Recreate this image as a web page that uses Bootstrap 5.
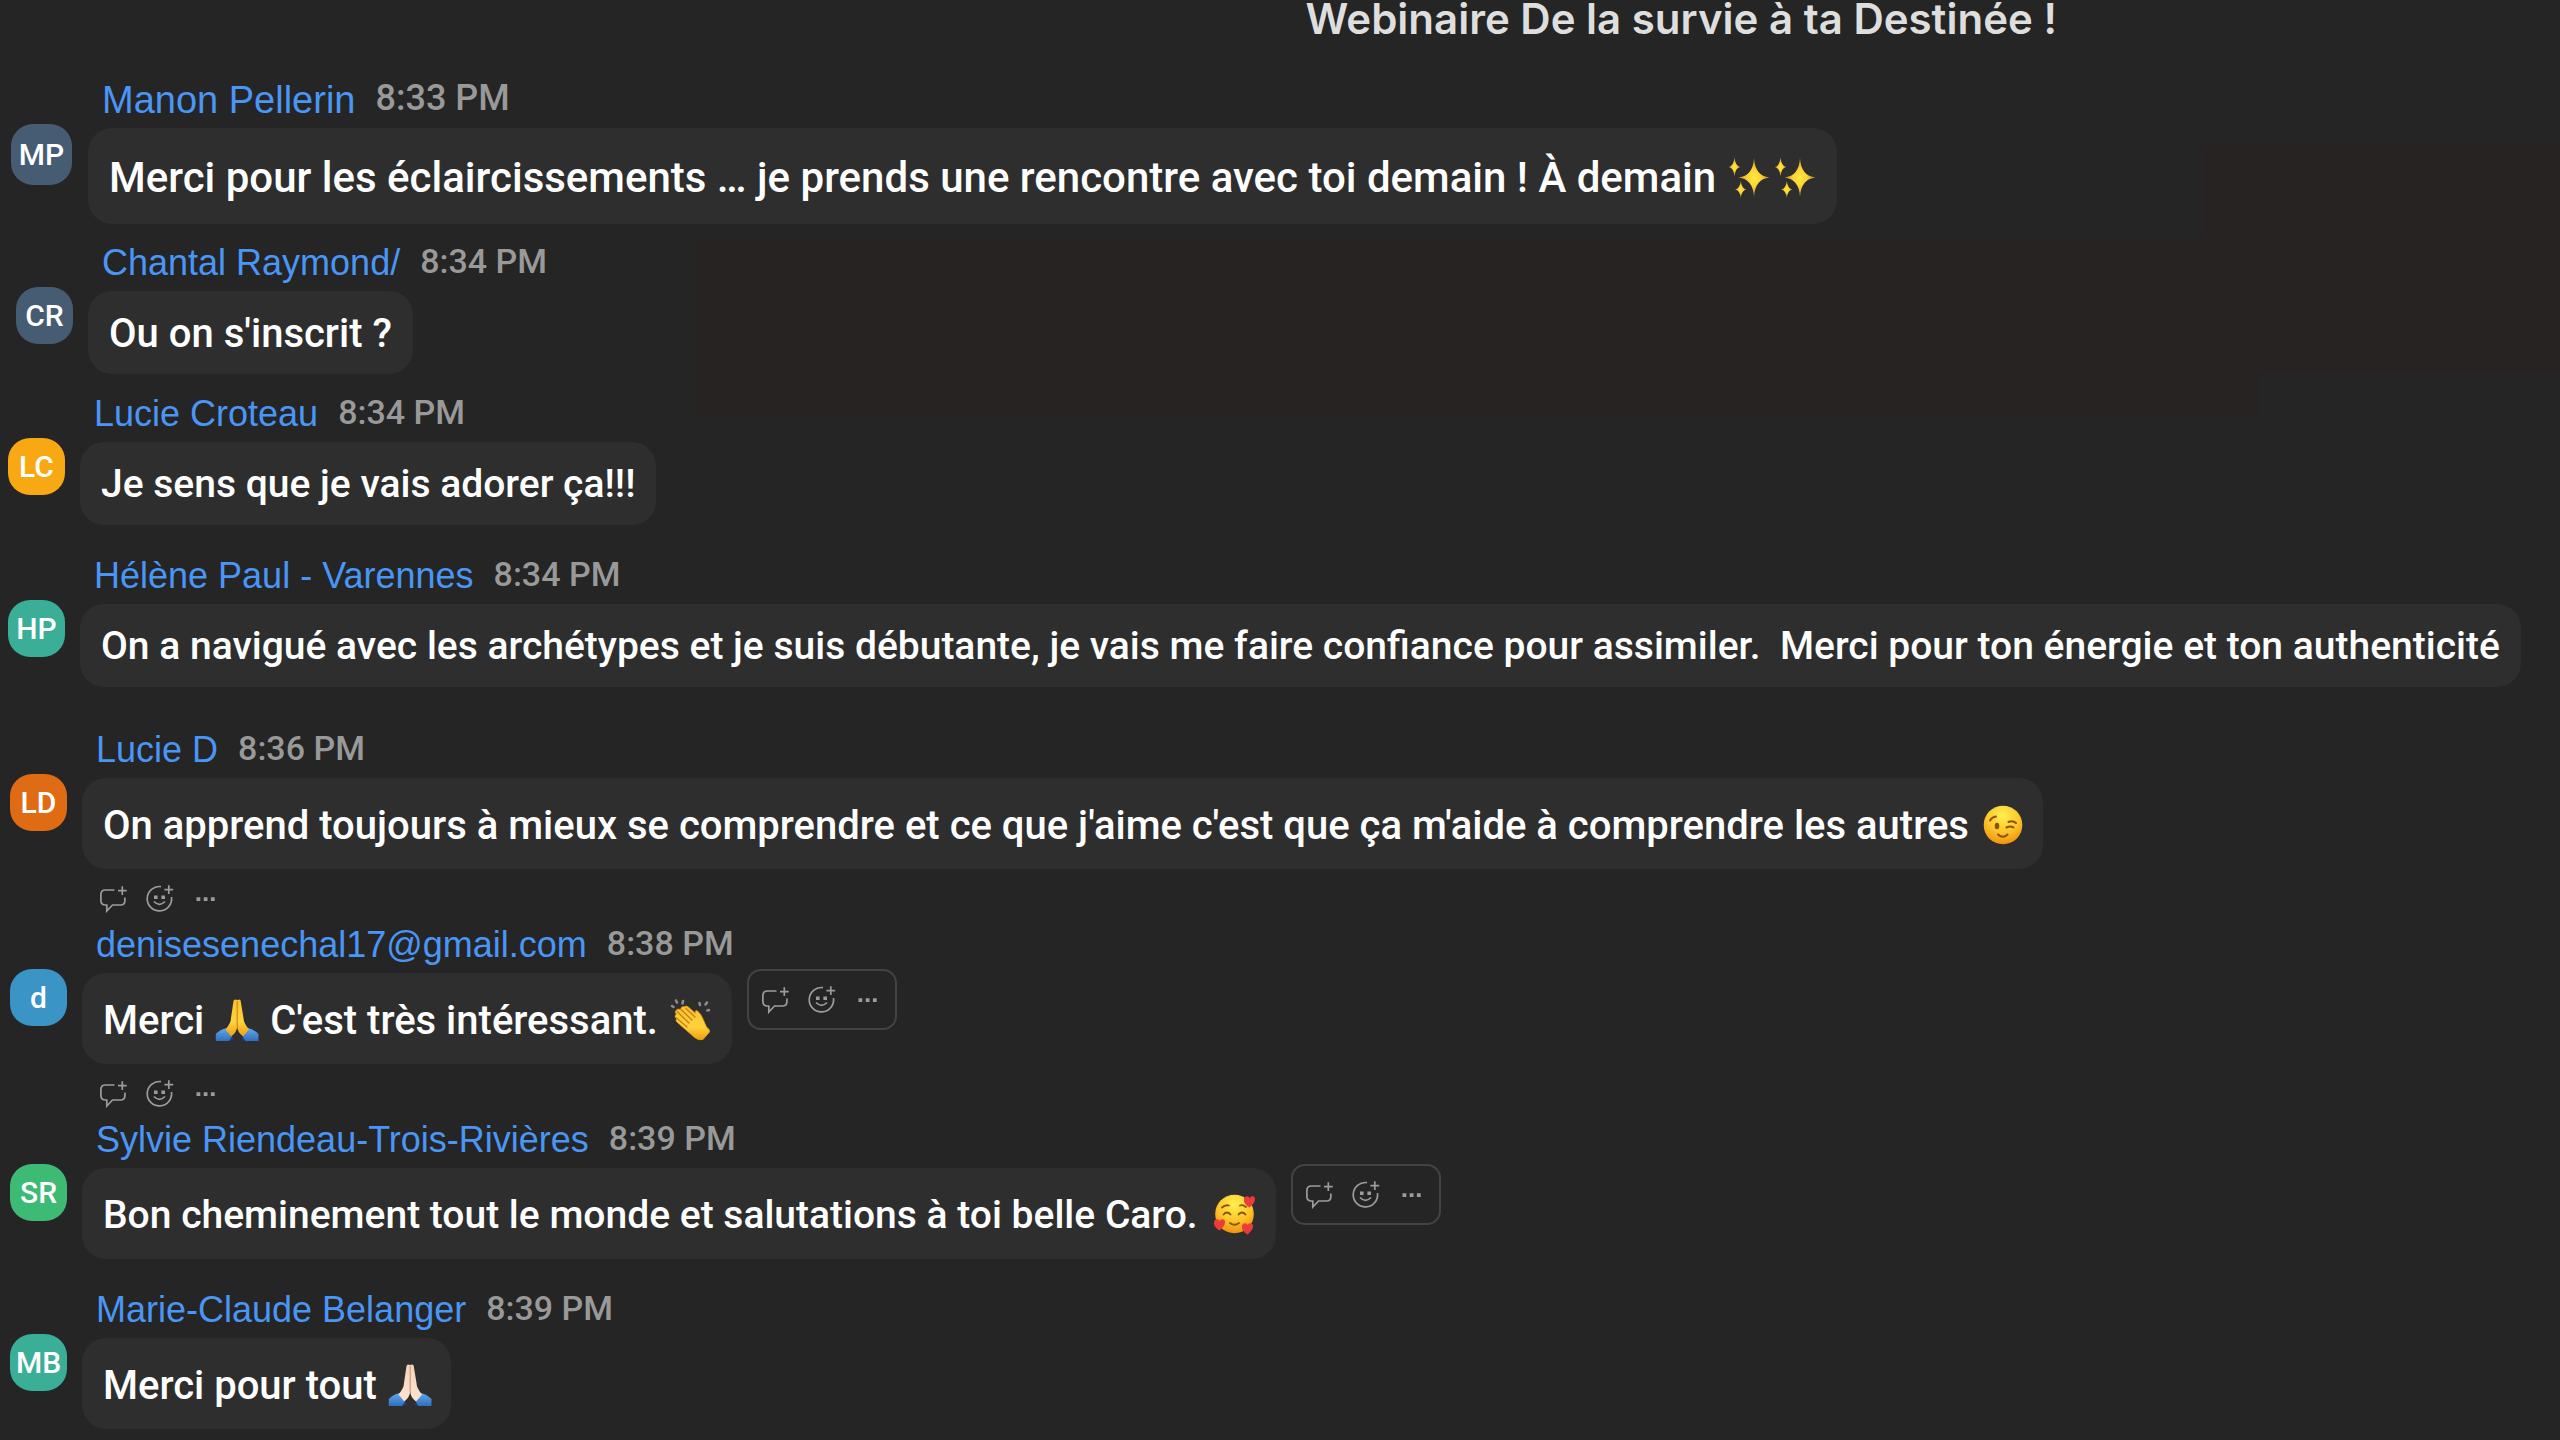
<!DOCTYPE html>
<html lang="fr" data-bs-theme="dark">
<head>
<meta charset="utf-8">
<meta name="viewport" content="width=device-width, initial-scale=1">
<title>Webinaire De la survie à ta Destinée !</title>
<link href="https://cdn.jsdelivr.net/npm/bootstrap@5.3.0/dist/css/bootstrap.min.css" rel="stylesheet">
<style>
  body {
    background-color: #252525;
    background-image: linear-gradient(#272322, #272322), linear-gradient(#272322, #272322);
    background-size: 61% 179px, 14% 227px;
    background-position: right 302px top 239px, right 0 top 145px;
    background-repeat: no-repeat;
    color: #fff;
    font-family: Roboto, "Liberation Sans", sans-serif;
  }
  .chat-title { margin-left: 51%; height: 79px; font: 600 42px/38px Inter, sans-serif; color: #dedede; }
  .msg { padding-left: 10px; gap: 15px; margin-bottom: 30px; }
  .msg-tight { margin-bottom: 19px; }
  .msg-wide { margin-bottom: 42px; }
  .msg-acts { margin-bottom: 0; }
  .msg-in { padding-left: 16px; }
  .msg-out { padding-left: 8px; }
  .avatar { width: 57px; height: 57px; margin-top: 45px; border-radius: 22px; font-size: 30px; font-weight: 500; line-height: 1; }
  .bg-slate { background: #465c73; }
  .bg-amber { background: #f8a813; }
  .bg-teal { background: #3aae97; }
  .bg-rust { background: #df6c14; }
  .bg-sky { background: #3a94c6; }
  .bg-leaf { background: #3dba74; }
  .who { gap: 20px; padding-left: 14px; margin-bottom: 7px; }
  .who a { font: 400 36px/42px "Liberation Sans", sans-serif; color: #4a96f5; text-decoration: none; }
  .who time { font-size: 34px; font-weight: 500; line-height: 38px; color: #999; }
  .bubble { background: #2e2e2e; border-radius: 24px; padding: 19px 21px 17px; font-size: 40px; font-weight: 500; line-height: 47px; white-space: pre-wrap; }
  .bubble-tall { padding: 24px 18px 20px 21px; }
  .bubble-dense { font-size: 39px; }
  .bubble svg { width: 46px; height: 44px; vertical-align: -8px; }
  .bubble-dense svg { margin-left: 14px; }
  .msg-lg { padding-left: 11px; gap: 16px; margin-bottom: 18px; }
  .msg-lg .avatar { width: 61px; height: 61px; }
  .msg-lg .who a { font-size: 38px; }
  .msg-lg .who time { font-size: 36px; }
  .msg-lg .bubble { font-size: 42px; padding: 26px 18px 23px 21px; }
  .acts { gap: 18px; }
  .acts-row { padding: 16px 0 11px 18px; }
  .acts-box { border: 2px solid #434343; border-radius: 14px; height: 61px; padding: 0 13px; margin: -4px 0 0 15px; }
  .acts button { border: 0; padding: 0; background: none; display: block; line-height: 0; }
  .acts svg { width: 28px; height: 28px; stroke: #9c9c9c; stroke-width: 1.7; fill: none; }
</style>
<script src="https://cdn.jsdelivr.net/npm/bootstrap@5.3.0/dist/js/bootstrap.bundle.min.js"></script>
</head>
<body>
<svg width="0" height="0" class="position-absolute" aria-hidden="true">
  <defs>
    <radialGradient id="gFace" cx=".5" cy=".25" r=".8"><stop offset="0" stop-color="#fff04e"/><stop offset=".55" stop-color="#fcc42a"/><stop offset="1" stop-color="#ee8a08"/></radialGradient>
    <linearGradient id="gHand" x2="0" y2="1"><stop offset="0" stop-color="#f9c22d"/><stop offset=".6" stop-color="#ffd33e"/><stop offset="1" stop-color="#f0a010"/></linearGradient>
    <linearGradient id="gPale" x2="0" y2="1"><stop offset="0" stop-color="#f5d5ba"/><stop offset="1" stop-color="#fde3cf"/></linearGradient>
    <linearGradient id="gCuff" x2="0" y2="1"><stop offset="0" stop-color="#62a9ee"/><stop offset="1" stop-color="#2f6fbd"/></linearGradient>
    <radialGradient id="gStar"><stop offset="0" stop-color="#ffe83f"/><stop offset=".45" stop-color="#fbd334"/><stop offset="1" stop-color="#c98224"/></radialGradient>
    <symbol id="reply" viewBox="0 0 28 28"><path d="M14.500 5H5.500Q.9 5 .9 9.500V15.500Q.9 20 5.500 20H6.800V26L12.500 20H20.500Q24.900 20 24.900 15.500V12.500M22.300 1.200V10M18 5.600H26.700"/></symbol>
    <symbol id="react" viewBox="0 0 28 28"><path d="M15 1.600A12.200 12.200 0 1 0 25.500 12M22.800 .2V9M18.400 4.600H27.200M8 16.500Q13.500 22.200 19 16.500"/><path fill="#9c9c9c" stroke="none" d="M8 10.500h3.600v3.600H8zM15.400 10.500H19v3.600h-3.600z"/></symbol>
    <symbol id="more" viewBox="0 0 28 28"><path fill="#9c9c9c" stroke="none" d="M4.500 12.200h3.800V16H4.500zM11.700 12.200h3.800V16h-3.800zM18.900 12.200h3.800V16h-3.800z"/></symbol>
    <symbol id="sparkles" viewBox="0 0 44 44"><g fill="url(#gStar)"><path d="M26 2Q27 20 41.500 21.500Q27 23 26 41Q25 23 10.500 21.500Q25 20 26 2Z"/><path d="M6.500 1.500Q7.300 10.200 12.200 11Q7.300 11.800 6.500 20.500Q5.700 11.800 .8 11Q5.700 10.200 6.500 1.500Z"/><path d="M12.800 25Q13.600 32.700 18.500 33.500Q13.600 34.300 12.800 42Q12 34.300 7 33.500Q12 32.700 12.800 25Z"/></g></symbol>
    <symbol id="wink" viewBox="0 0 44 44"><circle cx="23" cy="22" r="19.300" fill="url(#gFace)"/><g fill="none" stroke="#8a5306" stroke-width="2" stroke-linecap="round"><path d="M10 17.500Q12 14 16 13.500M28.500 19Q32.500 17 36 20M26.500 24.500Q30.500 22.500 33.500 24.500M18 31.500Q23 36 27.500 31.500"/></g><ellipse cx="17" cy="23" rx="2.300" ry="3.300" fill="#8a5306"/></symbol>
    <symbol id="adore" viewBox="0 0 44 44"><circle cx="21.500" cy="22" r="19.300" fill="url(#gFace)"/><g fill="none" stroke="#8a5306" stroke-width="1.800" stroke-linecap="round"><path d="M9 15.500Q12 12.500 16 13.500M27 13.500Q30 12.500 33 15M10.500 22.500Q14 18.500 17.500 22.500M25.500 22.500Q29 18.500 32.500 22.500M17 31Q21.500 34.500 26 31"/></g><g fill="#ec3b3b"><path id="hrt" d="M36.500 15.500C31 12 30.500 9 31.200 6.200C32.500 3 36 4 36.500 6C38 3.500 42 3.500 42 7C42 10.500 39 13.500 36.500 15.500Z"/><use href="#hrt" transform="translate(-30 23)"/><use href="#hrt" transform="translate(-2 27)"/></g></symbol>
    <symbol id="clap" viewBox="0 0 44 44"><path fill="url(#gHand)" stroke="#e59a13" stroke-width=".8" d="M6.500 13Q8.500 10 11.500 11.500Q12 8 15.500 8.500Q18 7 20.500 10L26.500 15.500Q25.500 11.500 28.500 13Q32 16 33.500 20L37.500 29Q41.500 32 40.500 34L34 41.500Q29 43 25 39L9 25Q6 23 7.500 20.500Q4.500 18 7.500 16Q5.500 14.500 6.500 13Z"/><path fill="none" stroke="#c98113" stroke-width="1.400" stroke-linecap="round" d="M8 13.500L20 25M12 11.500L23 22M7.500 20L18 29M17 10.500L26 19"/><path stroke="#8d8d8d" stroke-width="2.600" stroke-linecap="round" d="M3 8L4.500 9M7 2.500L8 4.500M14 3L13.500 5.500M30.500 5L31 7M38 4.500L36.500 6.500M40 12L38.500 12.500"/></symbol>
    <symbol id="sleeves" viewBox="0 0 44 44"><path fill="#163f80" d="M11 31L19 41L15 43H9ZM34 31L26 41L30 43H36Z"/><path fill="url(#gCuff)" d="M.8 36Q5 31.500 11.500 30L17 37.500Q15.500 41.500 14 43H.8ZM43.500 36Q39 31.500 33 30L27.500 37.500Q29 41.500 30.500 43H43.500Z"/></symbol>
    <symbol id="pray" viewBox="0 0 44 44"><use href="#sleeves"/><path fill="url(#gHand)" d="M22.200 2Q25.500 .5 25.700 3L28.500 20Q28.500 25 34 31.500L28 38.500Q22.200 34 22.200 28Q22 34 16.300 38.500L10.500 31.500Q16 25 16 20L18.500 3Q19 .5 22.200 2Z"/><path d="M22.200 3V29" stroke="#cf8b13" stroke-width="1.200"/></symbol>
    <symbol id="praypale" viewBox="0 0 44 44"><use href="#sleeves"/><path fill="url(#gPale)" d="M22.200 2Q25.500 .5 25.700 3L28.500 20Q28.500 25 34 31.500L28 38.500Q22.200 34 22.200 28Q22 34 16.300 38.500L10.500 31.500Q16 25 16 20L18.500 3Q19 .5 22.200 2Z"/><path d="M22.200 3V29" stroke="#c99b7e" stroke-width="1.200"/></symbol>
  </defs>
</svg>

<h1 class="chat-title mb-0 text-nowrap">Webinaire De la survie à ta Destinée !</h1>

<main>
  <article class="msg msg-lg d-flex align-items-start">
    <span class="avatar bg-slate d-flex flex-shrink-0 align-items-center justify-content-center">MP</span>
    <div>
      <header class="who d-flex align-items-start"><a href="#">Manon Pellerin</a><time>8:33 PM</time></header>
      <div class="d-flex align-items-start"><p class="bubble mb-0">Merci pour les éclaircissements … je prends une rencontre avec toi demain ! À demain <svg role="img" aria-label="✨"><use href="#sparkles"/></svg><svg role="img" aria-label="✨"><use href="#sparkles"/></svg></p></div>
    </div>
  </article>

  <article class="msg msg-tight msg-in d-flex align-items-start">
    <span class="avatar bg-slate d-flex flex-shrink-0 align-items-center justify-content-center">CR</span>
    <div>
      <header class="who d-flex align-items-start"><a href="#">Chantal Raymond/</a><time>8:34 PM</time></header>
      <div class="d-flex align-items-start"><p class="bubble mb-0">Ou on s'inscrit ?</p></div>
    </div>
  </article>

  <article class="msg msg-out d-flex align-items-start">
    <span class="avatar bg-amber d-flex flex-shrink-0 align-items-center justify-content-center">LC</span>
    <div>
      <header class="who d-flex align-items-start"><a href="#">Lucie Croteau</a><time>8:34 PM</time></header>
      <div class="d-flex align-items-start"><p class="bubble bubble-dense mb-0">Je sens que je vais adorer ça!!!</p></div>
    </div>
  </article>

  <article class="msg msg-wide msg-out d-flex align-items-start">
    <span class="avatar bg-teal d-flex flex-shrink-0 align-items-center justify-content-center">HP</span>
    <div>
      <header class="who d-flex align-items-start"><a href="#">Hélène Paul - Varennes</a><time>8:34 PM</time></header>
      <div class="d-flex align-items-start"><p class="bubble bubble-dense mb-0">On a navigué avec les archétypes et je suis débutante, je vais me faire confiance pour assimiler.  Merci pour ton énergie et ton authenticité</p></div>
    </div>
  </article>

  <article class="msg msg-acts d-flex align-items-start">
    <span class="avatar bg-rust d-flex flex-shrink-0 align-items-center justify-content-center">LD</span>
    <div>
      <header class="who d-flex align-items-start"><a href="#">Lucie D</a><time>8:36 PM</time></header>
      <div class="d-flex align-items-start"><p class="bubble bubble-tall mb-0">On apprend toujours à mieux se comprendre et ce que j'aime c'est que ça m'aide à comprendre les autres <svg role="img" aria-label="😉"><use href="#wink"/></svg></p></div>
      <div class="acts acts-row d-flex"><button type="button" aria-label="Répondre"><svg><use href="#reply"/></svg></button><button type="button" aria-label="Réagir"><svg><use href="#react"/></svg></button><button type="button" aria-label="Plus"><svg><use href="#more"/></svg></button></div>
    </div>
  </article>

  <article class="msg msg-acts d-flex align-items-start">
    <span class="avatar bg-sky d-flex flex-shrink-0 align-items-center justify-content-center">d</span>
    <div>
      <header class="who d-flex align-items-start"><a href="#">denisesenechal17@gmail.com</a><time>8:38 PM</time></header>
      <div class="d-flex align-items-start"><p class="bubble bubble-tall mb-0">Merci <svg role="img" aria-label="🙏"><use href="#pray"/></svg> C'est très intéressant. <svg role="img" aria-label="👏"><use href="#clap"/></svg></p>
        <div class="acts acts-box d-flex align-items-center"><button type="button" aria-label="Répondre"><svg><use href="#reply"/></svg></button><button type="button" aria-label="Réagir"><svg><use href="#react"/></svg></button><button type="button" aria-label="Plus"><svg><use href="#more"/></svg></button></div></div>
      <div class="acts acts-row d-flex"><button type="button" aria-label="Répondre"><svg><use href="#reply"/></svg></button><button type="button" aria-label="Réagir"><svg><use href="#react"/></svg></button><button type="button" aria-label="Plus"><svg><use href="#more"/></svg></button></div>
    </div>
  </article>

  <article class="msg d-flex align-items-start">
    <span class="avatar bg-leaf d-flex flex-shrink-0 align-items-center justify-content-center">SR</span>
    <div>
      <header class="who d-flex align-items-start"><a href="#">Sylvie Riendeau-Trois-Rivières</a><time>8:39 PM</time></header>
      <div class="d-flex align-items-start"><p class="bubble bubble-tall bubble-dense mb-0">Bon cheminement tout le monde et salutations à toi belle Caro.<svg role="img" aria-label="🥰"><use href="#adore"/></svg></p>
        <div class="acts acts-box d-flex align-items-center"><button type="button" aria-label="Répondre"><svg><use href="#reply"/></svg></button><button type="button" aria-label="Réagir"><svg><use href="#react"/></svg></button><button type="button" aria-label="Plus"><svg><use href="#more"/></svg></button></div></div>
    </div>
  </article>

  <article class="msg msg-acts d-flex align-items-start">
    <span class="avatar bg-teal d-flex flex-shrink-0 align-items-center justify-content-center">MB</span>
    <div>
      <header class="who d-flex align-items-start"><a href="#">Marie-Claude Belanger</a><time>8:39 PM</time></header>
      <div class="d-flex align-items-start"><p class="bubble bubble-tall mb-0">Merci pour tout <svg role="img" aria-label="🙏🏻"><use href="#praypale"/></svg></p></div>
    </div>
  </article>
</main>
</body>
</html>
